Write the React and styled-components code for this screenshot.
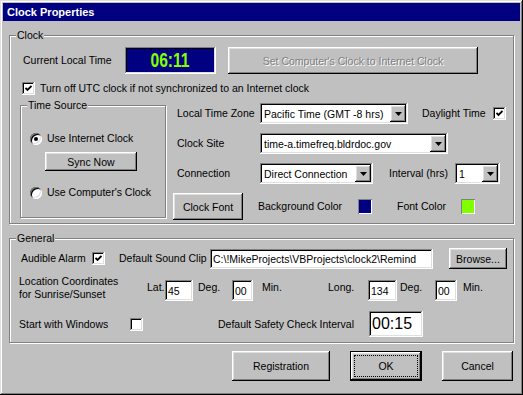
import React from 'react';
import styled, { createGlobalStyle, css } from 'styled-components';

const GlobalStyle = createGlobalStyle`
  html, body {
    margin: 0;
    padding: 0;
    background: #c0c0c0;
  }
  body {
    font-family: "Liberation Sans", Arial, sans-serif;
    font-size: 10.5px;
    color: #000;
  }
  * { box-sizing: border-box; }
`

const raised = css`
  box-shadow: inset -1px -1px 0 #000, inset 1px 1px 0 #fff,
    inset -2px -2px 0 #808080, inset 2px 2px 0 #dfdfdf;
`
const sunken = css`
  box-shadow: inset -1px -1px 0 #fff, inset 1px 1px 0 #808080,
    inset -2px -2px 0 #dfdfdf, inset 2px 2px 0 #000;
`

const Window = styled.div`
  width: 523px;
  height: 395px;
  background: #c0c0c0;
  padding: 3px;
  display: flex;
  flex-direction: column;
  box-shadow: inset -1px -1px 0 #000, inset 1px 1px 0 #dfdfdf,
    inset -2px -2px 0 #808080, inset 2px 2px 0 #fff;
`

const TitleBar = styled.div`
  height: 18px;
  background: #000080;
  color: #fff;
  font-weight: bold;
  font-size: 11px;
  padding-left: 4px;
  display: flex;
  align-items: center;
`

const Body = styled.div`
  padding: 0 6px;
  display: flex;
  flex-direction: column;
`

const Group = styled.fieldset`
  margin: ${p => p.$mt || 0}px 0 0;
  padding: 0;
  min-inline-size: 0;
  flex-shrink: 0;
  width: ${p => (p.$w ? p.$w + 'px' : 'auto')};
  height: ${p => (p.$h ? p.$h + 'px' : 'auto')};
  border: 1px solid #808080;
  box-shadow: inset 1px 1px 0 #fff, 1px 1px 0 #fff;
`

const Legend = styled.legend`
  margin-left: 6px;
  padding: 0 1px;
  line-height: 13px;
  font-size: 10.5px;
  background: #c0c0c0;
`

const GroupBody = styled.div`
  padding: ${p => p.$pad};
  display: flex;
  flex-direction: column;
`

const FormRow = styled.div`
  display: flex;
  align-items: ${p => p.$align || 'center'};
  height: ${p => (p.$h ? p.$h + 'px' : 'auto')};
  margin-top: ${p => p.$mt || 0}px;
  margin-left: ${p => p.$ml || 0}px;
  padding-right: ${p => p.$pr || 0}px;
  justify-content: ${p => p.$justify || 'flex-start'};
`

const Label = styled.span`
  flex-shrink: 0;
  white-space: nowrap;
  line-height: 13px;
  width: ${p => (p.$w ? p.$w + 'px' : 'auto')};
  margin-left: ${p => p.$ml || 0}px;
  margin-top: ${p => p.$mt || 0}px;
`

const TwoLine = styled.div`
  width: ${p => p.$w}px;
  line-height: 13px;
  flex-shrink: 0;
`

const TimeBox = styled.div`
  width: 91px;
  height: 27px;
  background: #000080;
  ${sunken};
  display: flex;
  align-items: center;
  justify-content: center;
`

const TimeText = styled.span`
  color: #80ff00;
  font-weight: bold;
  font-size: 20px;
  display: inline-block;
  transform: scaleX(0.78);
`

const Button = styled.button`
  flex-shrink: 0;
  width: ${p => p.$w}px;
  height: ${p => p.$h || 23}px;
  margin-left: ${p => p.$ml || 0}px;
  margin-top: ${p => p.$mt || 0}px;
  padding: 0;
  border: none;
  background: #c0c0c0;
  font-family: "Liberation Sans", Arial, sans-serif;
  font-size: 10.5px;
  color: #000;
  display: flex;
  align-items: center;
  justify-content: center;
  ${raised};
  &:disabled {
    color: #808080;
    text-shadow: 1px 1px 0 #fff;
  }
  ${p => p.$default && css`
    box-shadow: inset 0 0 0 1px #000, inset -2px -2px 0 #000, inset 2px 2px 0 #fff,
      inset -3px -3px 0 #808080, inset 3px 3px 0 #dfdfdf;
  `}
`

const FocusRing = styled.span`
  align-self: stretch;
  flex: 1;
  margin: 4px;
  border: 1px dotted #000;
  display: flex;
  align-items: center;
  justify-content: center;
`

const Select = styled.div`
  flex-shrink: 0;
  width: ${p => p.$w}px;
  height: 21px;
  background: #fff;
  ${sunken};
  padding: 2px;
  display: flex;
  align-items: center;
`

const SelectText = styled.span`
  flex: 1;
  padding-left: 2px;
  white-space: nowrap;
  overflow: hidden;
`

const ArrowButton = styled.span`
  width: 16px;
  height: 17px;
  background: #c0c0c0;
  ${raised};
  display: flex;
  align-items: center;
  justify-content: center;
`

const Field = styled.div`
  flex-shrink: 0;
  width: ${p => p.$w}px;
  height: ${p => p.$h || 21}px;
  margin-top: ${p => p.$mt || 0}px;
  background: #fff;
  ${sunken};
  padding: 0 3px;
  display: flex;
  align-items: center;
  font-size: ${p => p.$fs || 10.5}px;
  white-space: nowrap;
  overflow: hidden;
`

const CheckBox = styled.span`
  flex-shrink: 0;
  width: 13px;
  height: 13px;
  margin-left: ${p => p.$ml || 0}px;
  background: #fff;
  ${sunken};
  display: flex;
  align-items: center;
  justify-content: center;
`

const Radio = styled.span`
  flex-shrink: 0;
  width: 12px;
  height: 12px;
  border-radius: 50%;
  margin-left: ${p => p.$ml || 0}px;
  background: #fff;
  box-shadow: inset 1px 1px 0 #808080, inset -1px -1px 0 #fff,
    inset 2px 2px 0 #000, inset -2px -2px 0 #dfdfdf;
  display: flex;
  align-items: center;
  justify-content: center;
`

const RadioDot = styled.span`
  width: 4px;
  height: 4px;
  border-radius: 50%;
  background: #000;
`

const Swatch = styled.span`
  flex-shrink: 0;
  width: 16px;
  height: 17px;
  background: ${p => p.$color};
  box-shadow: inset 1px 1px 0 #808080, inset -1px -1px 0 #fff;
  border: 1px solid #c0c0c0;
`

const Split = styled.div`
  display: flex;
  align-items: flex-start;
  margin-top: ${p => p.$mt || 0}px;
`

const Column = styled.div`
  display: flex;
  flex-direction: column;
  margin-left: ${p => p.$ml || 0}px;
`

const Check = () => (
  <svg width="7" height="7" viewBox="0 0 7 7">
    <polyline points="0.5,3 2.5,5 6.5,1" fill="none" stroke="#000" strokeWidth="1.8" />
  </svg>
)

const Arrow = () => (
  <svg width="7" height="4" viewBox="0 0 7 4">
    <polygon points="0,0 7,0 3.5,4" fill="#000" />
  </svg>
)

const Combo = ({ w, children }) => (
  <Select $w={w}>
    <SelectText>{children}</SelectText>
    <ArrowButton><Arrow /></ArrowButton>
  </Select>
)

export default function App() {
  return (
    <>
      <GlobalStyle />
      <Window>
        <TitleBar>Clock Properties</TitleBar>
        <Body>
          <Group $mt={8}>
            <Legend>Clock</Legend>
            <GroupBody $pad="5px 0 3px 10px">
              <FormRow $h={27}>
                <Label $w={102} $ml={3}>Current Local Time</Label>
                <TimeBox><TimeText>06:11</TimeText></TimeBox>
                <Button $w={250} $h={27} $ml={12} disabled>Set Computer's Clock to Internet Clock</Button>
              </FormRow>
              <FormRow $h={13} $mt={8}>
                <CheckBox $ml={2}><Check /></CheckBox>
                <Label $ml={5}>Turn off UTC clock if not synchronized to an Internet clock</Label>
              </FormRow>
              <Split $mt={4}>
                <Group $w={146} $h={119}>
                  <Legend>Time Source</Legend>
                  <GroupBody $pad="0 0 0 9px">
                    <FormRow $h={13} $mt={20}>
                      <Radio><RadioDot /></Radio>
                      <Label $ml={5}>Use Internet Clock</Label>
                    </FormRow>
                    <Button $w={92} $h={19} $ml={15} $mt={7}>Sync Now</Button>
                    <FormRow $h={13} $mt={15}>
                      <Radio />
                      <Label $ml={5}>Use Computer's Clock</Label>
                    </FormRow>
                  </GroupBody>
                </Group>
                <Column $ml={7}>
                  <FormRow $h={21} $mt={4}>
                    <Label $w={83} $ml={4}>Local Time Zone</Label>
                    <Combo w={148}>Pacific Time (GMT -8 hrs)</Combo>
                    <Label $w={71} $ml={14}>Daylight Time</Label>
                    <CheckBox><Check /></CheckBox>
                  </FormRow>
                  <FormRow $h={21} $mt={9}>
                    <Label $w={83} $ml={4}>Clock Site</Label>
                    <Combo w={188}>time-a.timefreq.bldrdoc.gov</Combo>
                  </FormRow>
                  <FormRow $h={21} $mt={9}>
                    <Label $w={83} $ml={4}>Connection</Label>
                    <Combo w={113}>Direct Connection</Combo>
                    <Label $w={66} $ml={16}>Interval (hrs)</Label>
                    <Combo w={45}>1</Combo>
                  </FormRow>
                  <FormRow $h={27} $mt={9}>
                    <Button $w={70} $h={27}>Clock Font</Button>
                    <Label $w={99} $ml={15}>Background Color</Label>
                    <Swatch $color="#000080" />
                    <Label $w={63} $ml={24}>Font Color</Label>
                    <Swatch $color="#80ff00" />
                  </FormRow>
                </Column>
              </Split>
            </GroupBody>
          </Group>

          <Group $mt={8}>
            <Legend>General</Legend>
            <GroupBody $pad="3px 0 5px 9px">
              <FormRow $h={21}>
                <Label $w={71} $ml={2}>Audible Alarm</Label>
                <CheckBox><Check /></CheckBox>
                <Label $w={91} $ml={14}>Default Sound Clip</Label>
                <Field $w={223} $h={20}>{"C:\\!MikeProjects\\VBProjects\\clock2\\Remind"}</Field>
                <Button $w={58} $h={21} $ml={16}>Browse...</Button>
              </FormRow>
              <FormRow $mt={6} $align="flex-start">
                <TwoLine $w={128}>Location Coordinates<br />for Sunrise/Sunset</TwoLine>
                <Label $w={18} $mt={6}>Lat.</Label>
                <Field $w={28} $mt={5}>45</Field>
                <Label $w={34} $ml={5} $mt={6}>Deg.</Label>
                <Field $w={21} $mt={5}>00</Field>
                <Label $w={66} $ml={9} $mt={6}>Min.</Label>
                <Label $w={40} $mt={6}>Long.</Label>
                <Field $w={29} $mt={5}>134</Field>
                <Label $w={35} $ml={3} $mt={6}>Deg.</Label>
                <Field $w={22} $mt={5}>00</Field>
                <Label $ml={6} $mt={6}>Min.</Label>
              </FormRow>
              <FormRow $h={26} $mt={10}>
                <Label $w={111}>Start with Windows</Label>
                <CheckBox />
                <Label $w={151} $ml={75}>Default Safety Check Interval</Label>
                <Field $w={54} $h={26} $fs={16}>00:15</Field>
              </FormRow>
            </GroupBody>
          </Group>

          <FormRow $mt={8} $justify="flex-end" $pr={1}>
            <Button $w={98} $h={30}>Registration</Button>
            <Button $w={72} $h={30} $ml={20} $default><FocusRing>OK</FocusRing></Button>
            <Button $w={71} $h={30} $ml={20}>Cancel</Button>
          </FormRow>
        </Body>
      </Window>
    </>
  );
}
